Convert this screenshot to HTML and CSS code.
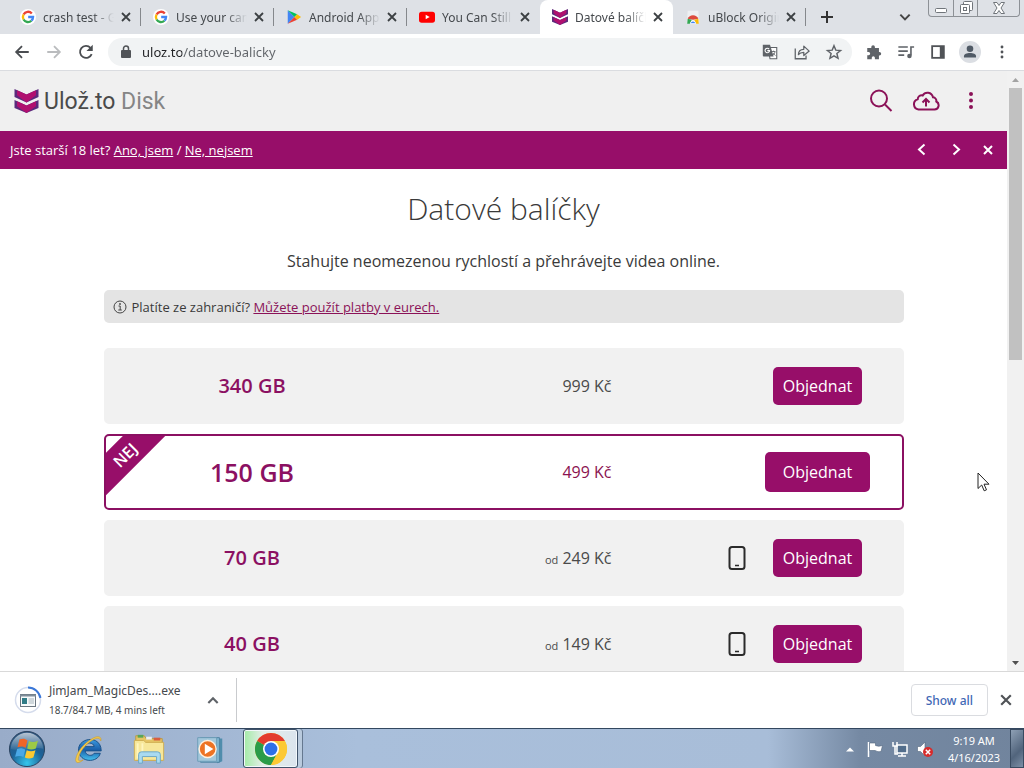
FILE: index.html
```html
<!doctype html>
<html lang="cs">
<head>
<meta charset="utf-8">
<title>Datové balíčky</title>
<link rel="stylesheet" href="styles.css">
</head>
<body>
<!-- shared shapes -->
<svg class="defs" aria-hidden="true">
	<symbol id="close" viewBox="0 0 10 10"><path d="M1 1l8 8M9 1L1 9" fill="none" stroke="currentColor" stroke-width="1.8"/></symbol>
	<symbol id="google" viewBox="0 0 18 18">
		<circle cx="9" cy="9" r="9" fill="#fff"/>
		<g fill="none" stroke-width="2.6">
			<path d="M13.3 5A5.7 5.7 0 0 0 4 6.2" stroke="#ea4335"/>
			<path d="M4 6.2a5.7 5.7 0 0 0 0 5.6" stroke="#fbbc05"/>
			<path d="M4 11.8A5.7 5.7 0 0 0 12.8 13.2" stroke="#34a853"/>
			<path d="M12.8 13.2A5.7 5.7 0 0 0 14.7 9H9.2" stroke="#4285f4"/>
		</g>
	</symbol>
	<symbol id="uloz" viewBox="0 0 24 24">
		<path d="M0 0l12 5.500L24 0v8l-12 5.500L0 8z" fill="#5b2a7c"/>
		<path d="M2.500 1.200L12 5.500l9.500-4.300v5L12 13.500 2.500 6.200z" fill="#b0106f"/>
		<path d="M0 11l12 5.500L24 11v8l-12 5-12-5z" fill="#5b2a7c"/>
		<path d="M2.500 12.200l9.500 4.300 9.500-4.300v5L12 24l-9.500-6.800z" fill="#b0106f"/>
	</symbol>
	<symbol id="phone" viewBox="0 0 18 26">
		<rect x="1.500" y="2" width="15" height="22" rx="2.500" fill="none" stroke="#2b2b2b" stroke-width="2"/>
		<path d="M7 20.500h4" stroke="#2b2b2b" stroke-width="1.500"/>
	</symbol>
</svg>

<div class="tabstrip">
	<div class="tab">
		<svg class="favicon"><use href="#google"/></svg>
		<span class="tab-title">crash test - G</span>
		<button class="tab-close" aria-label="Close"><svg><use href="#close"/></svg></button>
	</div>
	<div class="tab">
		<svg class="favicon"><use href="#google"/></svg>
		<span class="tab-title">Use your cam</span>
		<button class="tab-close" aria-label="Close"><svg><use href="#close"/></svg></button>
	</div>
	<div class="tab">
		<svg class="favicon" viewBox="0 0 18 18">
			<path d="M2 1.500v15L9.500 9z" fill="#4285f4"/>
			<path d="M2 1.500L9.500 9l3-3z" fill="#00c060"/>
			<path d="M2 16.500L9.500 9l3 3z" fill="#ea4335"/>
			<path d="M12.500 6L9.500 9l3 3L17 9z" fill="#fbbc05"/>
		</svg>
		<span class="tab-title">Android App</span>
		<button class="tab-close" aria-label="Close"><svg><use href="#close"/></svg></button>
	</div>
	<div class="tab no-line">
		<svg class="favicon" viewBox="0 0 18 18">
			<rect x="0" y="3" width="18" height="12.500" rx="3" fill="#f00"/>
			<path d="M7.500 6.500v5L12 9z" fill="#fff"/>
		</svg>
		<span class="tab-title">You Can Still</span>
		<button class="tab-close" aria-label="Close"><svg><use href="#close"/></svg></button>
	</div>
	<div class="tab active">
		<svg class="favicon"><use href="#uloz"/></svg>
		<span class="tab-title">Datové balíčk</span>
		<button class="tab-close" aria-label="Close"><svg><use href="#close"/></svg></button>
	</div>
	<div class="tab">
		<svg class="favicon" viewBox="0 0 18 18">
			<path d="M3 2h12l1 14H2z" fill="#eef0f2"/>
			<path d="M3 11a6.500 6.500 0 0 1 12 0l-6 1z" fill="#dd4b3e"/>
			<path d="M3 11l-.5 5.500h3.500L7.500 12z" fill="#34a853"/>
			<path d="M15 11l.5 5.500H12L10.500 12z" fill="#fbbc05"/>
			<path d="M6 16.500a3 3 0 0 1 6 0z" fill="#4285f4" stroke="#fff"/>
		</svg>
		<span class="tab-title">uBlock Origin</span>
		<button class="tab-close" aria-label="Close"><svg><use href="#close"/></svg></button>
	</div>
	<button class="new-tab" aria-label="New tab"><svg viewBox="0 0 12 12"><path d="M6 0v12M0 6h12" stroke="#333" stroke-width="2"/></svg></button>
	<button class="tab-search" aria-label="Search tabs"><svg viewBox="0 0 12 12"><path d="M2 4l4 4 4-4" fill="none" stroke="#444" stroke-width="1.700"/></svg></button>
	<div class="window-buttons">
		<button class="win-min" aria-label="Minimize"><svg viewBox="0 0 14 14"><rect x="1.500" y="7.500" width="11" height="4" rx="1" fill="#fff" stroke="#70757a"/></svg></button>
		<button class="win-max" aria-label="Restore"><svg viewBox="0 0 14 14" fill="#fff" stroke="#70757a"><rect x="4.500" y=".5" width="9" height="9" rx="1"/><rect x="1.500" y="3.500" width="9" height="9" rx="1"/><rect x="4.500" y="6.500" width="3" height="3"/></svg></button>
		<button class="win-close" aria-label="Close window"><svg viewBox="0 0 14 14"><path d="M1.500 1.500h3.500l2 3 2-3h3.500L9 7l3.500 5.500H9L7 9.500l-2 3H1.500L5 7z" fill="#fff" stroke="#70757a"/></svg></button>
	</div>
</div>

<div class="toolbar">
	<button class="tool" aria-label="Back"><svg viewBox="0 0 20 20"><path d="M17.500 10H4M10 3.500L3.500 10l6.500 6.500" fill="none" stroke="#4a4d51" stroke-width="2"/></svg></button>
	<button class="tool" aria-label="Forward"><svg viewBox="0 0 20 20"><path d="M2.500 10H16M10 3.500l6.500 6.500-6.500 6.500" fill="none" stroke="#babcbe" stroke-width="2"/></svg></button>
	<button class="tool" aria-label="Reload"><svg viewBox="0 0 20 20"><path d="M16.300 12.300A6.700 6.700 0 1 1 15 5.300" fill="none" stroke="#4a4d51" stroke-width="2"/><path d="M17.500 2v7h-7z" fill="#4a4d51"/></svg></button>
	<div class="omnibox">
		<svg class="lock" viewBox="0 0 12 14"><rect x="1" y="5" width="10" height="8" rx="1" fill="#505357"/><path d="M3.500 6V3.500a2.500 2.500 0 0 1 5 0V6" fill="none" stroke="#505357" stroke-width="1.500"/></svg>
		<input class="url" type="text" aria-label="Address" value="uloz.to/datove-balicky">
		<button class="tool" aria-label="Translate"><svg viewBox="0 0 20 20"><path d="M8 5h9.500v12.500H10z" fill="#fff" stroke="#5f6368" stroke-width="1.200"/><path d="M2 2h8l4 13H3a1 1 0 0 1-1-1z" fill="#5f6368"/><path d="M9 6.800A2.500 2.500 0 1 0 9.500 8.500H7" fill="none" stroke="#fff" stroke-width="1.200"/><path d="M12 9.500h4M14 8.500v1M15.500 9.500c0 2-1.500 3.500-2.500 4M13 11l3 3" fill="none" stroke="#5f6368"/></svg></button>
		<button class="tool" aria-label="Share"><svg viewBox="0 0 20 20" fill="none" stroke="#5f6368" stroke-width="1.400"><path d="M2.500 6v11.500h12V14"/><path d="M6 13c0-4 2-6 6-6V3.500L18 9l-6 5v-3.500c-3 0-4.500.5-6 2.500z" stroke-linejoin="round"/></svg></button>
		<button class="tool" aria-label="Bookmark"><svg viewBox="0 0 20 20"><path d="M10 3l2 4.900 5.300.4-4.100 3.400 1.300 5.300-4.500-2.800L5.500 17l1.300-5.300-4.100-3.400L8 7.900z" fill="none" stroke="#5f6368" stroke-width="1.600"/></svg></button>
	</div>
	<button class="tool" aria-label="Extensions"><svg viewBox="0 0 20 20"><path d="M2.500 5.500H7V4.500a2 2 0 0 1 4 0v1h4.500V10h.5a2 2 0 0 1 0 4h-.5v4H11v-1.500a1.700 1.700 0 0 0-3.500 0V18h-5v-4.500H4A1.700 1.700 0 0 0 4 10H2.500z" fill="#5f6368"/></svg></button>
	<button class="tool" aria-label="Media"><svg viewBox="0 0 20 20"><path d="M1.500 4.500H12M1.500 9H12M1.500 13.500H8M15.500 14V4.500H19" fill="none" stroke="#5f6368" stroke-width="1.800"/><circle cx="13.800" cy="14.500" r="2.500" fill="#5f6368"/></svg></button>
	<button class="tool" aria-label="Side panel"><svg viewBox="0 0 20 20"><rect x="3.500" y="3.500" width="13" height="13" fill="none" stroke="#505357" stroke-width="2"/><path d="M12 3.500h4.500v13H12z" fill="#505357"/></svg></button>
	<button class="tool profile" aria-label="Profile"><svg viewBox="0 0 20 20" fill="#505a66"><circle cx="10" cy="7" r="3"/><path d="M4.500 15v-1c0-2 2.500-3 5.500-3s5.500 1 5.500 3v1z"/></svg></button>
	<button class="tool" aria-label="Menu"><svg viewBox="0 0 20 20" fill="#505357"><circle cx="10" cy="4.500" r="1.600"/><circle cx="10" cy="10" r="1.600"/><circle cx="10" cy="15.500" r="1.600"/></svg></button>
</div>

<div class="viewport">
	<div class="page">
		<header class="site-header">
			<a class="logo" href="#">
				<svg><use href="#uloz"/></svg>
				<span>Ulož.to <span class="logo-disk">Disk</span></span>
			</a>
			<nav class="site-nav">
				<a href="#" aria-label="Hledat"><svg viewBox="0 0 28 28"><circle cx="12" cy="11.500" r="8"/><path d="M18 17.500l6.500 6.500"/></svg></a>
				<a href="#" aria-label="Nahrát"><svg viewBox="0 0 28 28"><path d="M6.500 22.500a5.300 5.300 0 0 1-.8-10.300c.1-2.700 2.600-4.500 5-3.700 2.500-4.200 9-3.500 10.300 1.800 2.300.3 3.700 2.200 3.300 4.200 3.800 2 2.700 8-1.800 8z"/><path d="M14 19.500v-7M10.500 15.500L14 12l3.500 3.500"/></svg></a>
				<a href="#" aria-label="Menu"><svg class="dots" viewBox="0 0 28 28"><circle cx="14" cy="7" r="2"/><circle cx="14" cy="13.500" r="2"/><circle cx="14" cy="20" r="2"/></svg></a>
			</nav>
		</header>
		<div class="age-bar">
			<p>Jste starší 18 let? <a href="#">Ano, jsem</a> / <a href="#">Ne, nejsem</a></p>
			<div class="age-buttons">
				<button aria-label="Předchozí"><svg viewBox="0 0 14 14"><path d="M9.500 1.500L4 6.500l5.500 5"/></svg></button>
				<button aria-label="Další"><svg viewBox="0 0 14 14"><path d="M5.500 1.500l5.500 5-5.500 5"/></svg></button>
				<button aria-label="Zavřít"><svg viewBox="0 0 14 14"><path d="M3 3l8 8M11 3l-8 8"/></svg></button>
			</div>
		</div>
		<main class="content">
			<h1>Datové balíčky</h1>
			<p class="lead">Stahujte neomezenou rychlostí a přehrávejte videa online.</p>
			<p class="notice">
				<svg viewBox="0 0 14 14"><circle cx="7" cy="7" r="6" fill="none" stroke="#444"/><path d="M5.500 6h1.700v4M5.300 10h3.500" fill="none" stroke="#444"/><circle cx="7" cy="4" r=".9" fill="#444"/></svg>
				<span>Platíte ze zahraničí? <a href="#">Můžete použít platby v eurech.</a></span>
			</p>
			<ul class="packages">
				<li class="package">
					<strong class="size">340 GB</strong>
					<span class="price">999 Kč</span>
					<span class="device"></span>
					<button class="order">Objednat</button>
				</li>
				<li class="package best">
					<span class="ribbon">NEJ</span>
					<strong class="size">150 GB</strong>
					<span class="price">499 Kč</span>
					<span class="device"></span>
					<button class="order">Objednat</button>
				</li>
				<li class="package">
					<strong class="size">70 GB</strong>
					<span class="price"><small>od</small> 249 Kč</span>
					<span class="device"><svg><use href="#phone"/></svg></span>
					<button class="order">Objednat</button>
				</li>
				<li class="package">
					<strong class="size">40 GB</strong>
					<span class="price"><small>od</small> 149 Kč</span>
					<span class="device"><svg><use href="#phone"/></svg></span>
					<button class="order">Objednat</button>
				</li>
			</ul>
		</main>
	</div>
	<div class="scrollbar">
		<svg viewBox="0 0 17 17"><path d="M5 11l3.500-4 3.500 4z" fill="#a3a3a3"/></svg>
		<div class="track"><div class="thumb"></div></div>
		<svg viewBox="0 0 17 17"><path d="M5 7l3.500 4L12 7z" fill="#505050"/></svg>
	</div>
</div>

<div class="downloads">
	<div class="download">
		<svg class="progress" viewBox="0 0 28 28">
			<circle cx="14" cy="14" r="12.500" fill="none" stroke="#d5dcec" stroke-width="1.500"/>
			<path d="M14 1.500A12.500 12.500 0 0 1 26.400 12" fill="none" stroke="#3b78d8" stroke-width="2"/>
			<rect x="6.500" y="8.500" width="15" height="12" fill="#f7fafb" stroke="#6b7680"/>
			<path d="M6 9.500h16" stroke="#7f8d99" stroke-width="2"/>
			<path d="M8 12h5v6H8z" fill="#317c87"/>
			<path d="M14.500 13h5.500M14.500 15h5.500M14.500 17h5.500" stroke="#a7b4bc"/>
		</svg>
		<div class="file">
			<span class="file-name">JimJam_MagicDes....exe</span>
			<span class="file-status">18.7/84.7 MB, 4 mins left</span>
		</div>
		<button class="file-menu" aria-label="Options"><svg viewBox="0 0 12 12"><path d="M2 8.500l4-4 4 4" fill="none" stroke="#5f6368" stroke-width="1.800"/></svg></button>
	</div>
	<button class="show-all">Show all</button>
	<button class="shelf-close" aria-label="Close"><svg><use href="#close"/></svg></button>
</div>

<div class="taskbar">
	<button class="start" aria-label="Start">
		<svg viewBox="0 0 40 40">
			<defs>
				<radialGradient id="orb" cx=".5" cy=".9" r=".9"><stop offset="0" stop-color="#35c6ec"/><stop offset=".5" stop-color="#1c6398"/><stop offset="1" stop-color="#30557d"/></radialGradient>
				<linearGradient id="shine" x2="0" y2="1"><stop offset="0" stop-color="#fff" stop-opacity=".65"/><stop offset="1" stop-color="#fff" stop-opacity=".05"/></linearGradient>
			</defs>
			<circle cx="20" cy="20" r="18.500" fill="url(#orb)" stroke="#29415e"/>
			<path d="M3 20a17 17 0 0 1 34 0c-10-4-24 4-34 0z" fill="url(#shine)"/>
			<path d="M12 10c3.500-1.500 6-1 8.500.8l-2 8.200c-2.500-1.800-5-2-8.500-.8z" fill="#ef6527"/>
			<path d="M22 11.500c3 1.500 6 1.400 9.500-.3l-2.200 8.300c-3.500 1.300-6 1.300-9.100 0z" fill="#9cca45"/>
			<path d="M9.600 20c3.500-1.300 6-.8 8.600.8l-2 7.700c-2.600-1.500-5.300-1.600-8.700-.3z" fill="#4aa8e6"/>
			<path d="M19.700 21.200c3 1.400 6 1.400 9.200 0L26.700 29c-3.300 1.400-6 1.300-9 0z" fill="#fcc932"/>
		</svg>
	</button>
	<button class="app" aria-label="Internet Explorer">
		<svg viewBox="0 0 36 36">
			<defs><linearGradient id="ie" x2="0" y2="1"><stop offset="0" stop-color="#3b9ae0"/><stop offset=".5" stop-color="#1b5fa9"/><stop offset="1" stop-color="#45c1ee"/></linearGradient></defs>
			<path fill-rule="evenodd" d="M32 20H15c.5 5.500 8 6 9.500 2.500H31C28.500 33 9 33 8 19.500 7 5.500 32 2.500 32 20zM15 15.500h9.500c-.5-5-9-5-9.500 0z" fill="url(#ie)" stroke="#174f86"/>
			<path d="M31.500 9.500c1.500-5-3.500-6-9-2.500C13.500 12 6.500 21 5 28.500c-.5 5.500 4 4.500 8 1-3 1.500-5.500 1.500-5.300-1C8.500 22 15 13 23 8.500c4-2.500 8-2.800 8.500 1z" fill="#f5cc4e" stroke="#c99a28" stroke-width=".6"/>
		</svg>
	</button>
	<button class="app" aria-label="Explorer">
		<svg viewBox="0 0 36 36">
			<path d="M4 4h9l2 3h17v23H4z" fill="#e5c565" stroke="#b89a44"/>
			<path d="M6 3h6v3H6z" fill="#58a557"/><path d="M15 5h6v3h-6z" fill="#efefef"/><path d="M23 6h7v3h-7z" fill="#d95e3f"/>
			<path d="M2.500 9h10l2 2h19v19h-31z" fill="#f7e79a" stroke="#cfae52"/>
			<path d="M6 12v16M11 12v16" stroke="#fff5be" stroke-width="2"/>
			<path d="M7 33V24q0-3 3-3h17q3 0 3 3v9h-4v-7H11v7z" fill="#a9daf0" stroke="#6aa6c5"/>
		</svg>
	</button>
	<button class="app" aria-label="Media Player">
		<svg viewBox="0 0 36 36">
			<path d="M10 7h21v24l-5 2z" fill="#4f8dac"/>
			<path d="M8 6h20v26H8z" fill="#80b7d2" stroke="#4f83a2"/>
			<path d="M5 6h20v25H5z" fill="#a3c8dc" stroke="#6b9bb6"/>
			<circle cx="15.500" cy="18" r="9" fill="#ed7324" stroke="#fff0df" stroke-width="1.500"/>
			<path d="M12.500 12.500v11l9-5.500z" fill="#fff"/>
		</svg>
	</button>
	<button class="app running" aria-label="Chrome">
		<svg viewBox="0 0 36 36">
			<circle cx="18" cy="18" r="17" fill="#fcc934"/>
			<path d="M18 18L3.300 9.500A17 17 0 0 1 32.700 9.500z" fill="#e33b2e"/>
			<path d="M18 18L3.300 9.500A17 17 0 0 0 18 35l7-13z" fill="#2a9c4a"/>
			<path d="M18 9.500h14.700A17 17 0 0 1 18 35l7-13z" fill="#fcc934"/>
			<circle cx="18" cy="18" r="8.500" fill="#fff"/>
			<circle cx="18" cy="18" r="6.800" fill="#2e70e8"/>
		</svg>
	</button>
	<div class="tray">
		<button aria-label="Show hidden icons"><svg viewBox="0 0 18 18"><path d="M5 11.500L9 7.500l4 4z" fill="#fff"/></svg></button>
		<button aria-label="Action Center"><svg viewBox="0 0 18 18"><path d="M2.500 2v15" stroke="#fff" stroke-width="1.500"/><path d="M3.500 3h6v2.500q3 1.500 7 0l-1.500 6q-3 1-6-1H3.500z" fill="#fff" stroke="#50657e" stroke-width=".6"/></svg></button>
		<button aria-label="Network"><svg viewBox="0 0 18 18"><rect x="6" y="5" width="10" height="8" fill="#526d8b" stroke="#fff" stroke-width="1.500"/><path d="M7 16h8M11 13v3" stroke="#fff" stroke-width="1.500"/><path d="M2 2v4h4V2M4 6v8h3" fill="none" stroke="#fff" stroke-width="1.500"/></svg></button>
		<button aria-label="Volume"><svg viewBox="0 0 18 18"><path d="M1.500 6.500h3L9 2v14l-4.500-4.500h-3z" fill="#fff" stroke="#53667d" stroke-width=".6"/><circle cx="12" cy="12" r="5" fill="#d72b2b"/><path d="M9.800 9.800l4.400 4.400M14.200 9.800l-4.400 4.400" stroke="#fff" stroke-width="1.500"/></svg></button>
	</div>
	<div class="clock">
		<span>9:19 AM</span>
		<span>4/16/2023</span>
	</div>
	<button class="desktop" aria-label="Show desktop"></button>
</div>

<svg class="cursor" viewBox="0 0 13 20" aria-hidden="true"><path d="M1 1v15.500l3.700-3.500 2.500 5.800 2.300-1-2.500-5.600H12z" fill="#fff" stroke="#222"/></svg>
</body>
</html>
```

FILE: styles.css
```css
* {
	box-sizing: border-box;
}
html, body {
	height: 100%;
	margin: 0;
}
body {
	display: flex;
	flex-direction: column;
	overflow: hidden;
	font-family: "Open Sans", sans-serif;
	font-size: 13px;
	color: #3a3a3a;
	background: #fff;
}
button {
	margin: 0;
	padding: 0;
	border: 0;
	background: none;
	font-family: inherit;
	color: inherit;
}
svg {
	display: block;
	flex: none;
}
.defs {
	position: absolute;
	width: 0;
	height: 0;
}

/* tabs */
.tabstrip {
	display: flex;
	align-items: center;
	height: 34px;
	flex: none;
	padding-left: 8px;
	background: #dee1e6;
}
.tab {
	display: flex;
	align-items: center;
	flex: 0 1 133px;
	min-width: 0;
	height: 34px;
	padding: 0 10px 0 12px;
	font-family: "Noto Sans", sans-serif;
	font-size: 12px;
	color: #45494d;
	background: linear-gradient(#85888c, #85888c) right center / 1px 18px no-repeat;
}
.tab.no-line {
	background: none;
}
.tab.active {
	background: #fff;
	border-radius: 8px 8px 0 0;
}
.favicon {
	width: 16px;
	height: 16px;
}
.tab-title {
	flex: 1;
	min-width: 0;
	margin: 0 7px;
	overflow: hidden;
	white-space: nowrap;
	-webkit-mask-image: linear-gradient(to right, #000 70%, transparent);
	mask-image: linear-gradient(to right, #000 70%, transparent);
}
.tab-close svg {
	width: 10px;
	height: 10px;
	color: #3c4043;
}
.new-tab svg {
	width: 12px;
	height: 12px;
}
.new-tab {
	margin-left: 15px;
}
.tab-search {
	margin-left: auto;
	margin-right: 16px;
}
.tab-search svg {
	width: 14px;
	height: 14px;
}
.window-buttons {
	display: flex;
	align-self: flex-start;
	height: 17px;
	margin-right: 4px;
	border: 1px solid #8d9196;
	border-top: 0;
	border-radius: 0 0 4px 4px;
}
.window-buttons button {
	display: flex;
	align-items: center;
	justify-content: center;
	width: 24px;
}
.window-buttons button + button {
	border-left: 1px solid #8d9196;
}
.window-buttons .win-close {
	width: 42px;
}
.window-buttons svg {
	width: 14px;
	height: 14px;
}

/* toolbar */
.toolbar {
	display: flex;
	align-items: center;
	flex: none;
	height: 37px;
	padding: 0 6px;
	border-bottom: 1px solid #dadce0;
	background: #fff;
}
.tool {
	display: flex;
	align-items: center;
	justify-content: center;
	flex: none;
	width: 32px;
	height: 28px;
}
.tool svg {
	width: 18px;
	height: 18px;
}
.omnibox {
	display: flex;
	align-items: center;
	flex: 1;
	height: 28px;
	margin: 0 6px;
	padding: 0 2px 0 12px;
	border-radius: 14px;
	background: #f1f3f4;
}
.lock {
	width: 12px;
	height: 14px;
}
.url {
	flex: 1;
	min-width: 0;
	padding: 0 0 0 10px;
	border: 0;
	font-family: "Noto Sans", sans-serif;
	font-size: 13px;
	color: transparent;
	background: linear-gradient(to right, #202124 50px, #5f6368 50px);
	-webkit-background-clip: text;
	background-clip: text;
}
.profile svg {
	width: 22px;
	height: 22px;
	border-radius: 50%;
	background: #dbdee3;
}

/* page */
.viewport {
	display: flex;
	flex: 1;
	min-height: 0;
}
.page {
	flex: 1;
	min-width: 0;
	overflow: hidden;
}
.site-header {
	display: flex;
	align-items: center;
	justify-content: space-between;
	height: 60px;
	padding: 0 22px 0 14px;
	background: #f0f0f0;
}
.logo {
	display: flex;
	align-items: center;
	gap: 5px;
	font-family: Roboto, sans-serif;
	font-size: 23px;
	color: #4a4a4a;
	text-decoration: none;
}
.logo svg {
	width: 25px;
	height: 24px;
}
.logo-disk {
	color: #858585;
}
.site-nav {
	display: flex;
	gap: 17px;
}
.site-nav svg {
	width: 28px;
	height: 28px;
	fill: none;
	stroke: #8b1258;
	stroke-width: 2;
}
.site-nav .dots {
	fill: #8b1258;
	stroke: none;
}
.age-bar {
	display: flex;
	align-items: center;
	justify-content: space-between;
	height: 38px;
	padding: 0 12px 0 10px;
	color: #fff;
	background: #970e69;
}
.age-bar p {
	margin: 0;
}
.age-bar a {
	color: #fff;
	text-underline-offset: 1px;
}
.age-buttons {
	display: flex;
	gap: 19px;
}
.age-buttons svg {
	width: 14px;
	height: 14px;
	fill: none;
	stroke: #fff;
	stroke-width: 2;
}
.content {
	max-width: 800px;
	margin: 0 auto;
	padding-top: 20px;
}
h1 {
	margin: 0 0 20px;
	font-size: 30px;
	font-weight: 300;
	line-height: 40px;
	text-align: center;
}
.lead {
	margin: 0 0 17px;
	font-size: 16px;
	line-height: 24px;
	text-align: center;
}
.notice {
	display: flex;
	align-items: center;
	gap: 5px;
	height: 33px;
	margin: 0 0 25px;
	padding: 0 9px;
	border-radius: 5px;
	background: #e4e4e4;
}
.notice svg {
	width: 14px;
	height: 14px;
}
.notice a {
	color: #8b1258;
	text-underline-offset: 1px;
}
.packages {
	display: grid;
	gap: 10px;
	margin: 0;
	padding: 0;
	list-style: none;
}
.package {
	position: relative;
	display: grid;
	grid-template-columns: 293fr 213fr 134fr 144fr;
	align-items: center;
	height: 76px;
	padding-right: 12px;
	border: 2px solid #f1f1f1;
	border-radius: 5px;
	background: #f1f1f1;
	overflow: hidden;
}
.package.best {
	border-color: #8b1062;
	background: #fff;
}
.size {
	font-size: 20px;
	font-weight: 600;
	line-height: 26px;
	color: #8b1062;
	text-align: center;
}
.best .size {
	font-size: 25px;
}
.price {
	font-size: 16px;
	color: #4a4a4a;
	text-align: right;
}
.price small {
	font-size: 11px;
}
.best .price {
	font-weight: 500;
	color: #8b1250;
}
.device svg {
	width: 18px;
	height: 26px;
	margin-left: auto;
}
.order {
	justify-self: center;
	height: 38px;
	padding: 0 10px;
	border-radius: 5px;
	font-size: 16px;
	color: #fff;
	background: #970e69;
}
.best .order {
	height: 40px;
	padding: 0 18px;
}
/* corner ribbon */
.ribbon {
	position: absolute;
	top: 4px;
	left: -36px;
	width: 110px;
	height: 30px;
	transform: rotate(-45deg);
	font-size: 16px;
	font-weight: 600;
	line-height: 30px;
	text-align: center;
	color: #fff;
	background: #970e69;
}

/* scrollbar */
.scrollbar {
	display: flex;
	flex-direction: column;
	width: 17px;
	background: #f1f1f1;
}
.scrollbar svg {
	width: 17px;
	height: 17px;
}
.track {
	flex: 1;
	padding: 0 2px;
}
.thumb {
	height: 48%;
	background: #c1c1c1;
}

/* download shelf */
.downloads {
	display: flex;
	align-items: center;
	flex: none;
	height: 57px;
	padding-right: 12px;
	border-top: 1px solid #d9d9d9;
	font-family: "Noto Sans", sans-serif;
	background: #fff;
}
.download {
	display: flex;
	align-items: center;
	width: 237px;
	height: 44px;
	padding: 0 16px 0 14px;
	border-right: 1px solid #c9cbce;
}
.progress {
	width: 28px;
	height: 28px;
}
.file {
	display: flex;
	flex-direction: column;
	flex: 1;
	padding-left: 7px;
	white-space: nowrap;
}
.file-name {
	font-size: 12px;
	line-height: 20px;
	color: #45494d;
}
.file-status {
	font-size: 10px;
	line-height: 18px;
	color: #45494d;
}
.file-menu svg {
	width: 14px;
	height: 14px;
}
.show-all {
	height: 32px;
	margin-left: auto;
	padding: 0 14px;
	border: 1px solid #dadce0;
	border-radius: 4px;
	font-size: 12px;
	font-weight: 500;
	color: #3f68b5;
}
.shelf-close {
	margin-left: 12px;
	color: #505357;
}
.shelf-close svg {
	width: 12px;
	height: 12px;
}

/* taskbar */
.taskbar {
	display: flex;
	align-items: center;
	flex: none;
	height: 40px;
	border-top: 1px solid #33475f;
	background: linear-gradient(to right, #99acc9, #a9bfdb 35%, #a8bdd8 75%, #7589a3 84%, #71849d);
}
.start {
	width: 57px;
	padding-left: 8px;
}
.start svg {
	width: 38px;
	height: 38px;
}
.app {
	display: flex;
	align-items: center;
	justify-content: center;
	width: 61px;
	height: 39px;
}
.app svg {
	width: 34px;
	height: 34px;
}
.running {
	width: 55px;
	margin-left: 3px;
	border: 1px solid #40536b;
	border-radius: 3px;
	background: linear-gradient(to right, #a3eba6, #e3eee8 35%, #dbe4ee);
	box-shadow: inset 0 0 0 1px #f3f8fb, 4px 0 0 #b9cadd, 5px 0 0 #65788f;
}
.tray {
	display: flex;
	gap: 7px;
	margin-left: auto;
}
.tray svg {
	width: 18px;
	height: 18px;
}
.clock {
	display: flex;
	flex-direction: column;
	width: 76px;
	padding-left: 4px;
	font-family: "Noto Sans", sans-serif;
	font-size: 11px;
	line-height: 17px;
	text-align: center;
	color: #fff;
}
.desktop {
	width: 14px;
	height: 39px;
	border: 1px solid #394b61;
	background: linear-gradient(135deg, #8ea0b5, #51647c 60%, #7c8fa6);
}

/* mouse pointer lies over the page */
.cursor {
	position: absolute;
	top: 472px;
	left: 977px;
	width: 13px;
	height: 20px;
}
```
